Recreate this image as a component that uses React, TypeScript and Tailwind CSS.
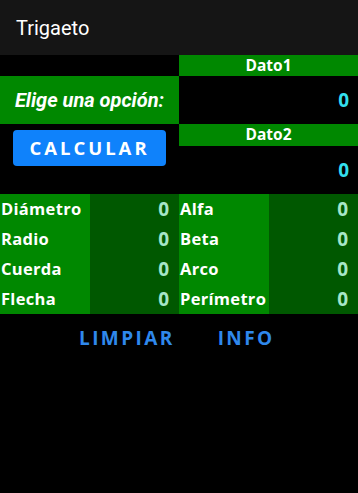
import React from "react";

const ub = { fontFamily: '"Open Sans", "DejaVu Sans", sans-serif' };

function Row({ label, value }: { label: string; value: string }) {
  return (
    <div className="flex h-[30px]">
      <div className="w-[90px] bg-[#008800] flex items-center text-white font-bold text-[16.5px] pl-[1px] tracking-[0.3px]" style={ub}>
        {label}
      </div>
      <div className="flex-1 bg-[#005800] flex items-center justify-end pr-[10px] text-[#a6e6c8] font-bold text-[19px]" style={ub}>
        {value}
      </div>
    </div>
  );
}

export default function App() {
  return (
    <div className="w-full h-[493px] bg-black" style={{ fontFamily: 'Roboto, "Liberation Sans", sans-serif' }}>
      <div className="h-[55px] bg-[#151515] flex items-center pl-4 text-white text-[20px]">Trigaeto</div>
      <div className="grid grid-cols-2">
        <div className="flex flex-col">
          <div className="h-[21px]" />
          <div className="h-[48px] bg-[#008800] flex items-center justify-center text-white italic font-bold text-[20px]">
            Elige una opción:
          </div>
          <div className="pt-[6px] pl-[13px]">
            <button
              className="w-[153px] h-[36px] rounded-[4px] bg-[#0f82fb] text-white font-bold text-[18.5px] tracking-[3px]"
              style={ub}
            >
              CALCULAR
            </button>
          </div>
        </div>
        <div className="flex flex-col">
          <div className="h-[21px] bg-[#008800] flex items-center justify-center text-white font-bold text-[15.5px]" style={ub}>
            Dato1
          </div>
          <div className="h-[48px] flex items-center justify-end pr-[9px] text-[#33dfee] font-bold text-[19px]" style={ub}>
            0
          </div>
          <div className="h-[22px] bg-[#008800] flex items-center justify-center text-white font-bold text-[15.5px]" style={ub}>
            Dato2
          </div>
          <div className="h-[48px] flex items-center justify-end pr-[9px] text-[#33dfee] font-bold text-[19px]" style={ub}>
            0
          </div>
        </div>
      </div>
      <div className="grid grid-cols-2">
        <div>
          <Row label="Diámetro" value="0" />
          <Row label="Radio" value="0" />
          <Row label="Cuerda" value="0" />
          <Row label="Flecha" value="0" />
        </div>
        <div>
          <Row label="Alfa" value="0" />
          <Row label="Beta" value="0" />
          <Row label="Arco" value="0" />
          <Row label="Perímetro" value="0" />
        </div>
      </div>
      <div className="h-[48px] flex items-center pl-[79px] gap-[43px] text-[#2f88ec] font-bold text-[19px] tracking-[2.4px]" style={ub}>
        <span>LIMPIAR</span>
        <span>INFO</span>
      </div>
    </div>
  );
}
